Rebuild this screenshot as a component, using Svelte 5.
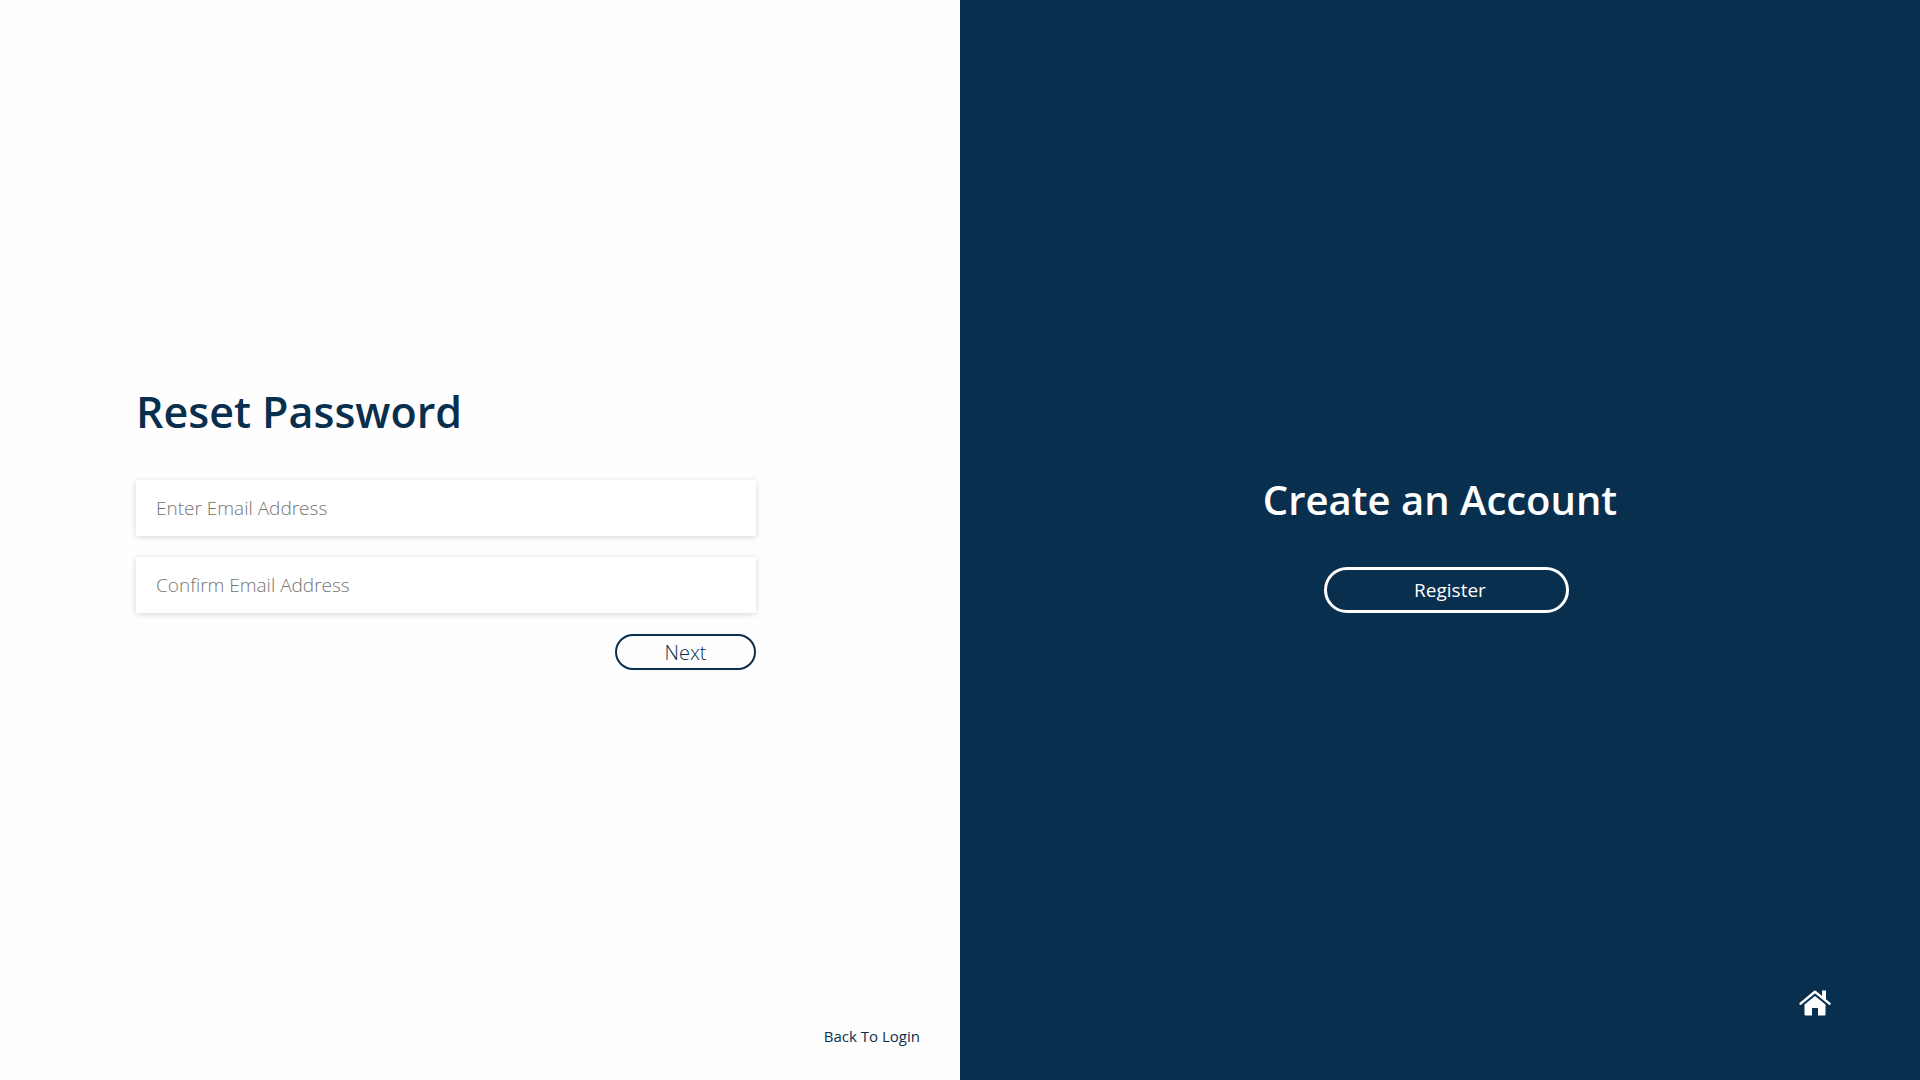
<script>
  let email = $state('');
  let confirmEmail = $state('');
</script>

<main class="page">
  <section class="reset">
    <form class="form" onsubmit={(event) => event.preventDefault()}>
      <h1>Reset Password</h1>
      <input type="email" aria-label="Enter Email Address" placeholder="Enter Email Address" bind:value={email} />
      <input type="email" aria-label="Confirm Email Address" placeholder="Confirm Email Address" bind:value={confirmEmail} />
      <button class="next" type="submit">Next</button>
    </form>
    <a class="back" href="#login">Back To Login</a>
  </section>

  <section class="create">
    <div class="invite">
      <h2>Create an Account</h2>
      <button class="register" type="button">Register</button>
    </div>
    <a class="home" href="#home" aria-label="Home">
      <svg viewBox="0 0 32 26" width="32" height="26" aria-hidden="true">
        <path d="M1.600 13.600 16 1.800 30.400 13.600" fill="none" stroke="currentColor" stroke-width="2.500" stroke-linecap="round" stroke-linejoin="round" />
        <path d="M23 .5h4v10l-4-3.300z" fill="currentColor" />
        <path d="M5.500 14.500 16 6l10.500 8.500V24.500q0 1-1 1H19v-7.500h-6v7.500H6.500q-1 0-1-1z" fill="currentColor" />
      </svg>
    </a>
  </section>
</main>

<style>
  :global(body) {
    margin: 0;
  }

  .page {
    display: grid;
    grid-template-columns: 1fr 1fr;
    min-height: 100vh;
    font-family: 'Open Sans', 'Noto Sans', sans-serif;
    color: #092f4e;
    background: #fefefe;
  }

  .reset,
  .create {
    box-sizing: border-box;
    display: flex;
    flex-direction: column;
  }

  .reset {
    padding: 380px 40px 32px 136px;
  }

  .form {
    display: flex;
    flex-direction: column;
    gap: 21px;
    width: 100%;
    max-width: 620px;
  }

  h1,
  h2 {
    margin: 0;
    font-weight: 600;
    white-space: nowrap;
  }

  h1 {
    margin-bottom: 15px;
    font-size: 43px;
    line-height: 64px;
  }

  input {
    box-sizing: border-box;
    width: 100%;
    height: 56px;
    padding: 0 20px;
    border: 0;
    background: #fff;
    box-shadow: 0 1px 6px rgba(0, 0, 0, 0.16);
    color: #092f4e;
    font: 300 19px 'Open Sans', 'Noto Sans', sans-serif;
  }

  input::placeholder {
    color: #757575;
    opacity: 1;
  }

  button {
    padding: 0;
    background: transparent;
    font-family: inherit;
    cursor: pointer;
  }

  .next {
    align-self: flex-end;
    width: 141px;
    height: 36px;
    padding-top: 2px;
    border: 2px solid #092f4e;
    border-radius: 18px;
    color: #092f4e;
    font-size: 20px;
    font-weight: 300;
    line-height: 30px;
  }

  .back {
    align-self: flex-end;
    margin-top: auto;
    color: #092f4e;
    font-size: 15px;
    line-height: 24px;
    text-decoration: none;
  }

  .create {
    padding: 472px 89px 64px;
    background: #092f4e;
    color: #fff;
  }

  .invite {
    display: flex;
    flex-direction: column;
    align-items: center;
    gap: 39px;
  }

  h2 {
    font-size: 40px;
    line-height: 56px;
  }

  .register {
    width: 245px;
    height: 46px;
    margin-left: 12px;
    padding-left: 8px;
    border: 3px solid #fff;
    border-radius: 23px;
    color: #fff;
    font-size: 19px;
    font-weight: 400;
  }

  .home {
    display: flex;
    align-self: flex-end;
    margin-top: auto;
    color: #fff;
  }
</style>
